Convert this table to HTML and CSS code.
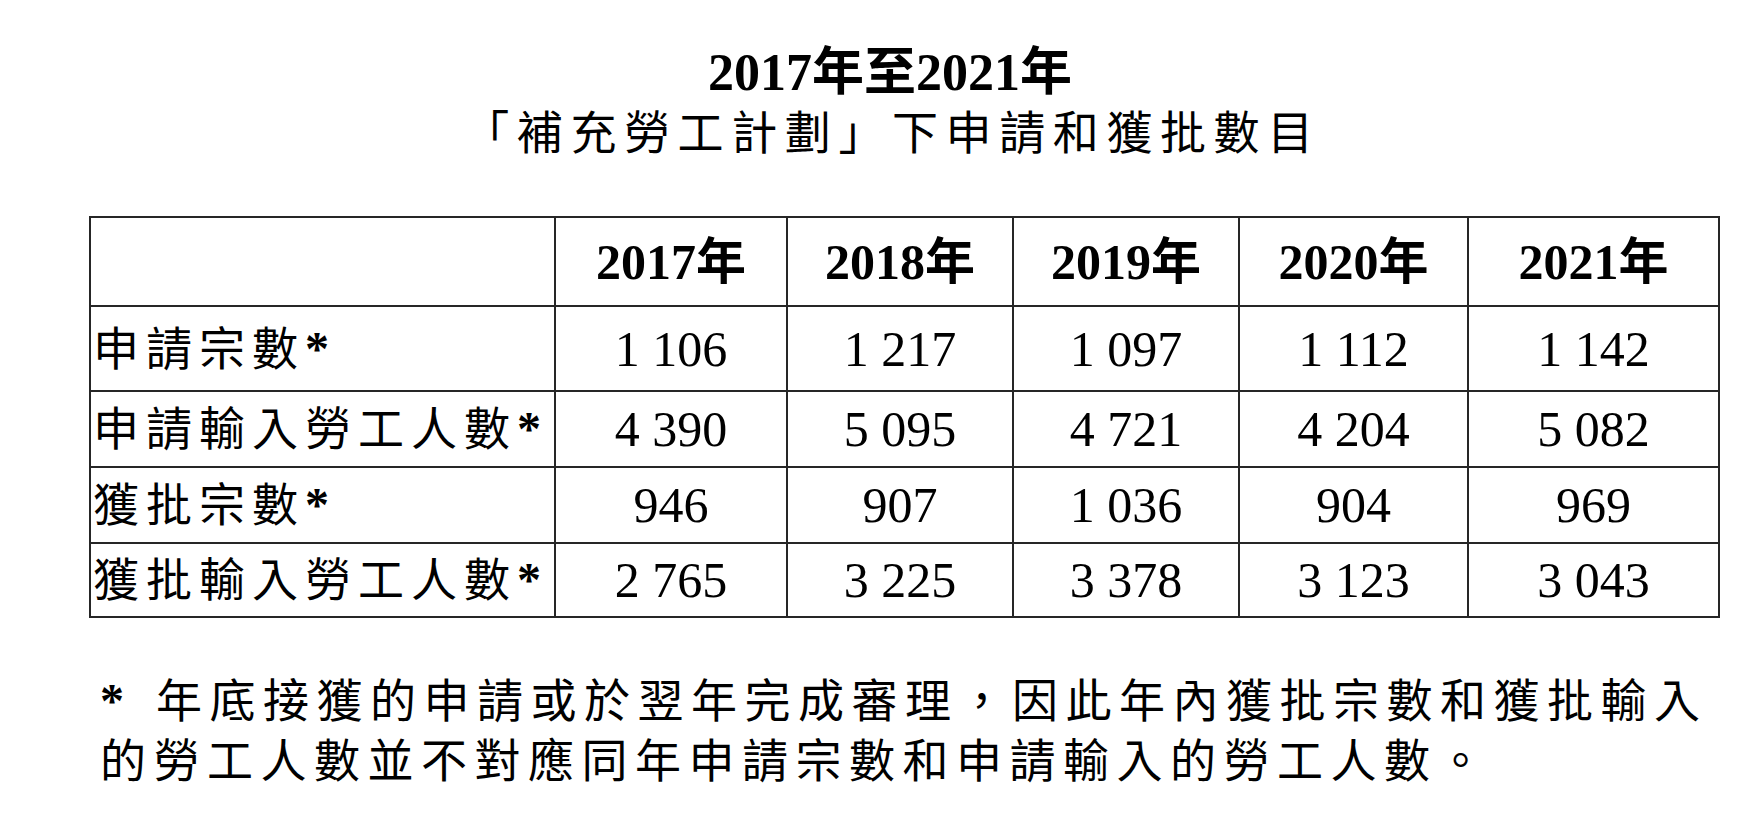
FILE: index.html
```html
<!DOCTYPE html>
<html lang="zh-Hant">
<head>
<meta charset="utf-8">
<title>補充勞工計劃</title>
<link rel="stylesheet" href="styles.css">
</head>
<body>
<div class="page">
  <header class="title">
    <div class="title-line1">2017年至2021年</div>
    <div class="title-line2">「補充勞工計劃」下申請和獲批數目</div>
  </header>
  <table class="data">
    <colgroup>
      <col class="c-label">
      <col class="c-2017">
      <col class="c-2018">
      <col class="c-2019">
      <col class="c-2020">
      <col class="c-2021">
    </colgroup>
    <thead>
      <tr class="r-head">
        <th></th>
        <th>2017年</th>
        <th>2018年</th>
        <th>2019年</th>
        <th>2020年</th>
        <th>2021年</th>
      </tr>
    </thead>
    <tbody>
      <tr class="r1">
        <td class="label">申請宗數<span class="ast">*</span></td>
        <td>1 106</td><td>1 217</td><td>1 097</td><td>1 112</td><td>1 142</td>
      </tr>
      <tr class="r2">
        <td class="label">申請輸入勞工人數<span class="ast">*</span></td>
        <td>4 390</td><td>5 095</td><td>4 721</td><td>4 204</td><td>5 082</td>
      </tr>
      <tr class="r3">
        <td class="label">獲批宗數<span class="ast">*</span></td>
        <td>946</td><td>907</td><td>1 036</td><td>904</td><td>969</td>
      </tr>
      <tr class="r4">
        <td class="label">獲批輸入勞工人數<span class="ast">*</span></td>
        <td>2 765</td><td>3 225</td><td>3 378</td><td>3 123</td><td>3 043</td>
      </tr>
    </tbody>
  </table>
  <p class="note"><span class="star">*</span>年底接獲的申請或於翌年完成審理，因此年內獲批宗數和獲批輸入<br>的勞工人數並不對應同年申請宗數和申請輸入的勞工人數。</p>
</div>
</body>
</html>
```

FILE: styles.css
```css
html, body {
  margin: 0;
  padding: 0;
  background: #ffffff;
}

body {
  font-family: "Liberation Serif", "Noto Sans CJK TC", serif;
  color: #000000;
}

.page {
  width: 1752px;
  height: 834px;
  overflow: hidden;
  position: relative;
}

.title {
  padding: 42px 0 0 28px;
  text-align: center;
}

.title-line1 {
  font-size: 52px;
  font-weight: 700;
  line-height: 61px;
}

.title-line2 {
  font-size: 46px;
  line-height: 61px;
  letter-spacing: 7.6px;
  padding-left: 4px;
}

.data {
  margin: 52px 0 0 89px;
  border-collapse: collapse;
  table-layout: fixed;
  width: 1631px;
}

.c-label { width: 465px; }
.c-2017 { width: 232px; }
.c-2018 { width: 226px; }
.c-2019 { width: 226px; }
.c-2020 { width: 229px; }
.c-2021 { width: 251px; }

.data th,
.data td {
  border: 2px solid #262626;
  padding: 0;
  text-align: center;
  vertical-align: middle;
  font-size: 50px;
  line-height: 1;
}

.data th {
  font-weight: 700;
}

.r-head th { height: 87px; }
.r1 td { height: 83px; }
.r2 td { height: 74px; }
.r3 td { height: 74px; }
.r4 td { height: 72px; }

.data td.label {
  text-align: left;
  padding-left: 2px;
  font-size: 46px;
  letter-spacing: 7px;
  white-space: nowrap;
}

.ast {
  font-weight: 700;
  font-size: 48px;
  letter-spacing: 0;
}

.note {
  margin: 53px 0 0 100px;
  font-size: 46px;
  line-height: 60px;
  letter-spacing: 7.5px;
  white-space: nowrap;
}

.star {
  display: inline-block;
  width: 56px;
  letter-spacing: 0;
  font-weight: 700;
  font-size: 48px;
}
```
